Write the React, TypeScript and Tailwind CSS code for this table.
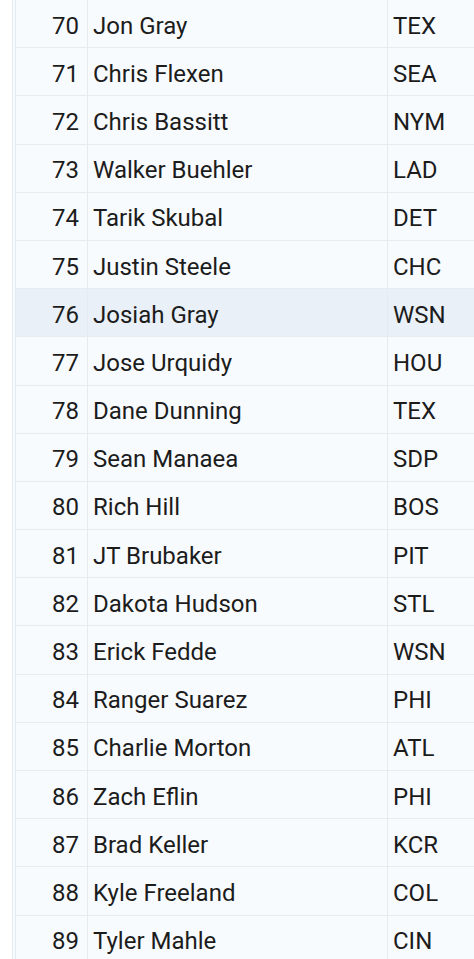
const players = [
  { rank: 70, name: "Jon Gray", team: "TEX" },
  { rank: 71, name: "Chris Flexen", team: "SEA" },
  { rank: 72, name: "Chris Bassitt", team: "NYM" },
  { rank: 73, name: "Walker Buehler", team: "LAD" },
  { rank: 74, name: "Tarik Skubal", team: "DET" },
  { rank: 75, name: "Justin Steele", team: "CHC" },
  { rank: 76, name: "Josiah Gray", team: "WSN" },
  { rank: 77, name: "Jose Urquidy", team: "HOU" },
  { rank: 78, name: "Dane Dunning", team: "TEX" },
  { rank: 79, name: "Sean Manaea", team: "SDP" },
  { rank: 80, name: "Rich Hill", team: "BOS" },
  { rank: 81, name: "JT Brubaker", team: "PIT" },
  { rank: 82, name: "Dakota Hudson", team: "STL" },
  { rank: 83, name: "Erick Fedde", team: "WSN" },
  { rank: 84, name: "Ranger Suarez", team: "PHI" },
  { rank: 85, name: "Charlie Morton", team: "ATL" },
  { rank: 86, name: "Zach Eflin", team: "PHI" },
  { rank: 87, name: "Brad Keller", team: "KCR" },
  { rank: 88, name: "Kyle Freeland", team: "COL" },
  { rank: 89, name: "Tyler Mahle", team: "CIN" },
];

export default function App() {
  return (
    <div className="h-[959px] w-[474px] overflow-hidden bg-white pl-[12px] font-['Roboto','Liberation_Sans',sans-serif] text-[24px] text-[#1c1c1c]">
      <div className="h-full border-l border-[#e4ebf1] bg-[#f8fbfd] pl-[2px]">
        <div className="border-l border-[#e4ebf1]">
          {players.map((p) => (
            <div
              key={p.rank}
              className={
                "flex h-[48.2px] items-center border-b border-[#e4ebf1] " +
                (p.rank === 76 ? "bg-[#e9f0f7]" : "bg-[#f8fbfd]")
              }
            >
              <div className="flex h-full w-[72px] items-center justify-end border-r border-[#e4ebf1] pr-[8px] pt-[4px]">
                {p.rank}
              </div>
              <div className="flex h-full w-[300px] items-center border-r border-[#e4ebf1] pl-[5px] pt-[4px]">
                {p.name}
              </div>
              <div className="flex h-full flex-1 items-center pl-[5px] pt-[4px]">{p.team}</div>
            </div>
          ))}
        </div>
      </div>
    </div>
  );
}
